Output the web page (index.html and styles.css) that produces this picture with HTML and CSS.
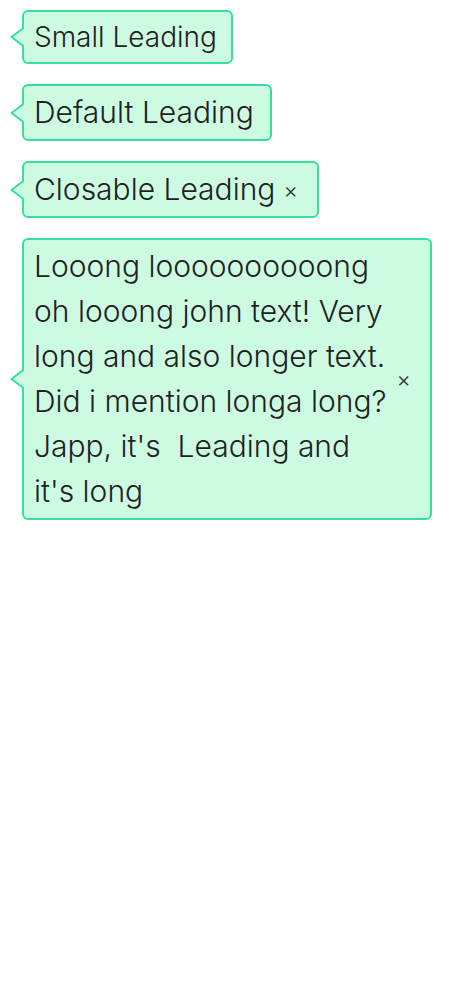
FILE: index.html
```html
<!DOCTYPE html>
<html>
<head>
<meta charset="utf-8">
<link rel="stylesheet" href="styles.css">
</head>
<body>
<div class="stack">
  <div class="tag tag-small">
    <svg class="arrow" width="15" height="22" viewBox="0 0 15 22"><path d="M15 1.5 L2.5 11 L15 20.5" fill="#cdfbe2" stroke="#36df9d" stroke-width="2" stroke-linejoin="round"/></svg>
    <span class="label">Small Leading</span>
  </div>
  <div class="tag">
    <svg class="arrow" width="15" height="22" viewBox="0 0 15 22"><path d="M15 1.5 L2.5 11 L15 20.5" fill="#cdfbe2" stroke="#36df9d" stroke-width="2" stroke-linejoin="round"/></svg>
    <span class="label">Default Leading</span>
  </div>
  <div class="tag tag-closable">
    <svg class="arrow" width="15" height="22" viewBox="0 0 15 22"><path d="M15 1.5 L2.5 11 L15 20.5" fill="#cdfbe2" stroke="#36df9d" stroke-width="2" stroke-linejoin="round"/></svg>
    <span class="label">Closable Leading</span>
    <span class="close">×</span>
  </div>
  <div class="tag tag-closable tag-long">
    <svg class="arrow" width="15" height="22" viewBox="0 0 15 22"><path d="M15 1.5 L2.5 11 L15 20.5" fill="#cdfbe2" stroke="#36df9d" stroke-width="2" stroke-linejoin="round"/></svg>
    <span class="label">Looong loooooooooong<br>oh looong john text! Very<br>long and also longer text.<br>Did i mention longa long?<br>Japp, it's &nbsp;Leading and<br>it's long</span>
    <span class="close">×</span>
  </div>
</div>
</body>
</html>
```
FILE: styles.css
```css
html, body {
  margin: 0;
  padding: 0;
  background: #ffffff;
}
body {
  font-family: Inter, "Noto Sans", sans-serif;
  font-weight: 300;
  color: #1f2222;
}
.stack {
  display: flex;
  flex-direction: column;
  align-items: flex-start;
  gap: 20px;
  padding: 10px 0 0 22px;
}
.tag {
  position: relative;
  display: inline-flex;
  align-items: center;
  background: #cdfbe2;
  border: 2px solid #36df9d;
  border-radius: 6px;
  padding: 4px 16px 4px 10px;
  font-size: 30px;
  line-height: 1.5;
}
.tag-small {
  font-size: 28px;
  padding-right: 14px;
}
.tag-closable {
  padding-right: 19px;
}
.label {
  display: block;
}
.arrow {
  position: absolute;
  left: -15px;
  top: 50%;
  margin-top: -11px;
  display: block;
}
.close {
  font-size: 22px;
  font-weight: 300;
  line-height: 1;
  margin-left: 8px;
  color: #333333;
}
.tag-long .close {
  margin-left: 10px;
}
```
